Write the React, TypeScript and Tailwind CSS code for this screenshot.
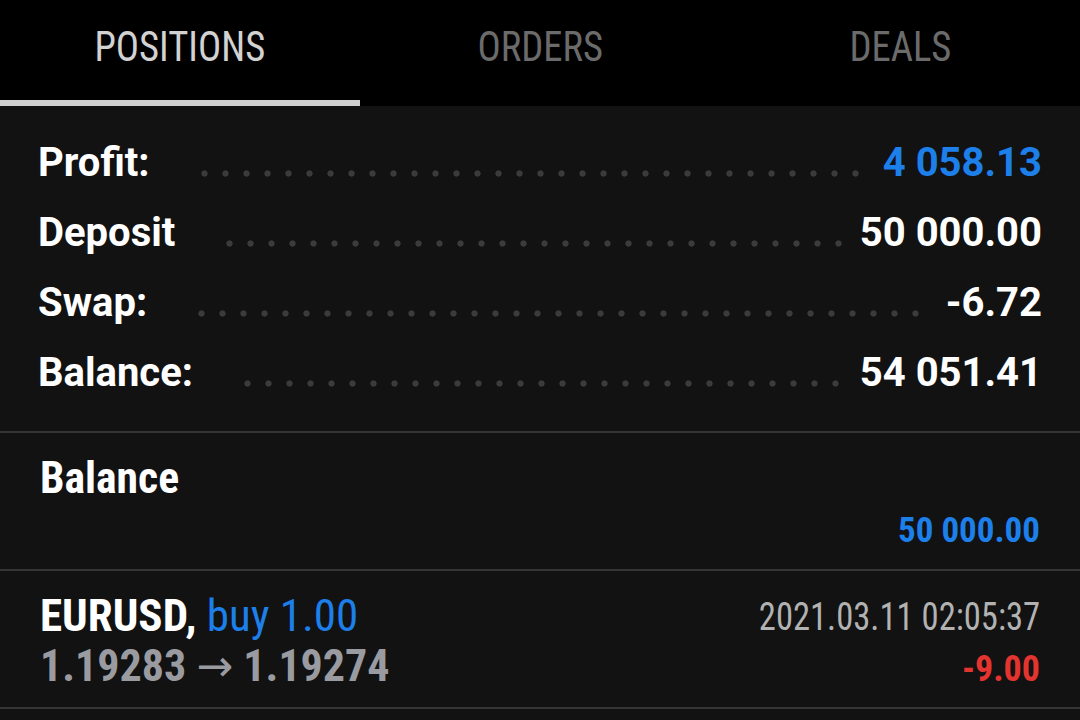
import React from 'react';

const roboto = "font-['Roboto','Liberation_Sans',sans-serif]";
const cond = "font-['Roboto_Condensed','Roboto','Liberation_Sans_Narrow',sans-serif]";

const tabs = ['POSITIONS', 'ORDERS', 'DEALS'];

const summary = [
  { label: 'Profit:', value: '4 058.13', blue: true },
  { label: 'Deposit', value: '50 000.00' },
  { label: 'Swap:', value: '-6.72' },
  { label: 'Balance:', value: '54 051.41' },
];

// dotted leader between a label and its value
const Dots: React.FC = () => (
  <div className="flex-1 ml-[44px] mr-[18px] mt-[20px] h-[7px] bg-[radial-gradient(circle,#3b3b3b_2.8px,transparent_3.4px)] bg-[length:21px_7px] bg-repeat-x" />
);

const App: React.FC = () => {
  return (
    <div className={`w-[1080px] h-[720px] bg-[#121212] overflow-hidden ${roboto}`}>
      {/* Tabs */}
      <div className={`grid grid-cols-3 h-[106px] bg-black ${cond}`}>
        {tabs.map((tab, i) => (
          <div key={tab} className="flex flex-col">
            <div
              className={`flex-1 flex items-center justify-center pb-[8px] text-[42px] ${
                i === 0 ? 'text-[#d2d2d2]' : 'text-[#6b6b6b]'
              }`}
            >
              <span className="inline-block scale-x-[0.92]">{tab}</span>
            </div>
            <div className={`h-[6px] ${i === 0 ? 'bg-[#d0d0d0]' : 'bg-black'}`} />
          </div>
        ))}
      </div>

      {/* Summary */}
      <div className="pt-[22px] pb-[23px] px-[38px] border-b-2 border-[#353535]">
        {summary.map((row) => (
          <div key={row.label} className="flex items-center h-[70px] text-[40px] font-bold">
            <span className="text-white">{row.label}</span>
            <Dots />
            <span className={row.blue ? 'text-[#1d7fe9]' : 'text-white'}>{row.value}</span>
          </div>
        ))}
      </div>

      {/* Balance operation */}
      <div className={`h-[138px] px-[40px] flex flex-col border-b-2 border-[#353535] ${cond}`}>
        <div className="h-[70px] mt-[10px] flex items-center text-[45px] font-bold text-white">
          <span className="inline-block origin-left scale-x-[0.97]">Balance</span>
        </div>
        <div className="h-[36px] flex items-center justify-end text-[35px] font-bold text-[#1d7fe9]">
          50 000.00
        </div>
      </div>

      {/* Position */}
      <div className={`h-[138px] pt-[20px] px-[40px] flex flex-col border-b-2 border-[#353535] ${cond}`}>
        <div className="flex items-center justify-between h-[50px]">
          <div className="text-[45px]">
            <span className="font-bold text-white">EURUSD, </span>
            <span className="text-[#1d7fe9]">buy 1.00</span>
          </div>
          <span className="inline-block origin-right scale-x-[0.91] mt-[3px] text-[38px] text-[#b2b2b2]">
            2021.03.11 02:05:37
          </span>
        </div>
        <div className="flex items-center justify-between h-[50px]">
          <div className="text-[44px] font-bold text-[#9a9ba0] whitespace-nowrap">
            1.19283{' '}
            <span className="font-['DejaVu_Sans',sans-serif] font-normal">→</span>
            {' '}1.19274
          </div>
          <div className="mt-[5px] text-[36px] font-bold text-[#e3342f]">-9.00</div>
        </div>
      </div>
    </div>
  );
};

export default App;
